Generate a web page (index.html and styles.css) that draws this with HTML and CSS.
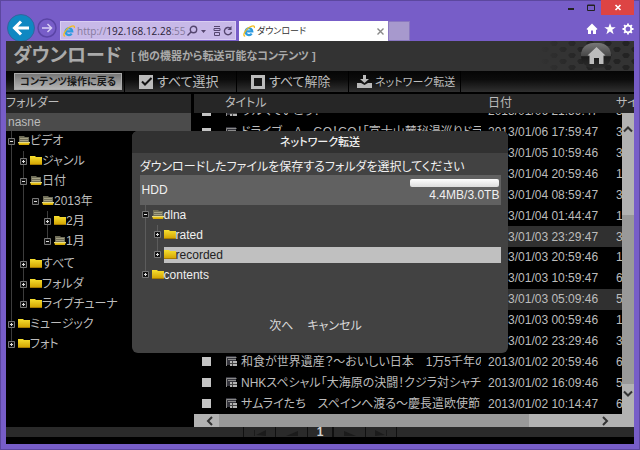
FILE: index.html
```html
<!DOCTYPE html>
<html lang="ja">
<head>
<meta charset="utf-8">
<title>ダウンロード</title>
<link rel="stylesheet" href="styles.css">
</head>
<body>
<svg width="0" height="0" class="defs" aria-hidden="true">
  <defs>
    <linearGradient id="gold" x1="0" y1="0" x2="0" y2="1"><stop offset="0" stop-color="#f8e030"/><stop offset="1" stop-color="#d0a000"/></linearGradient>
    <linearGradient id="fade" x1="0" x2="1" y1="0" y2="0"><stop offset="0" stop-color="#333"/><stop offset=".2" stop-color="#333"/><stop offset=".6" stop-color="#333" stop-opacity="0"/></linearGradient>
    <linearGradient id="knob" x1="0" x2="0" y1="0" y2="1"><stop offset="0" stop-color="#777"/><stop offset=".5" stop-color="#4a4a4a"/><stop offset=".55" stop-color="#1c1c1c"/><stop offset="1" stop-color="#2c2c2c"/></linearGradient>
    <pattern id="hex" width="18" height="12" patternUnits="userSpaceOnUse"><path fill="#232323" d="M2 0h4l2 2-2 3H2L0 2zM11 6h4l2 2-2 3h-4L9 8z"/></pattern>
    <symbol id="closed" viewBox="0 0 12 10"><path fill="url(#gold)" d="M0 0h5l1 1h6v8H0z"/><path fill="#a87c00" d="M0 8h12v1H0z"/></symbol>
    <symbol id="open" viewBox="0 0 12 10"><path fill="#6f6d58" d="M1 0h5l1 1h4v5H1z"/><path fill="#a5a184" d="M2 2h8v1H2zM2 4h8v1H2z"/><path fill="url(#gold)" d="M0 6h12l-1 3H1z"/><path fill="#e8dc80" d="M0 6h12v1H0z"/></symbol>
    <symbol id="plus" viewBox="0 0 7 7"><path fill="#111" stroke="#777" d="M.5.5h6v6h-6z"/><path fill="#ddd" d="M2 3h3v1H2zM3 2h1v3H3z"/></symbol>
    <symbol id="minus" viewBox="0 0 7 7"><path fill="#111" stroke="#777" d="M.5.5h6v6h-6z"/><path fill="#ddd" d="M2 3h3v1H2z"/></symbol>
    <symbol id="ie" viewBox="0 0 12 12"><path fill="none" stroke="#2e9be0" stroke-width="2.2" d="M3 6.4h6.3A3.4 3.4 0 1 0 8.7 8.6"/><path fill="none" stroke="#f2bd1d" stroke-width="1.3" d="M2.2 11C-1 11 2 5 6 2.5 9 .5 12 0 11.3 3"/></symbol>
    <symbol id="clip" viewBox="0 0 13 11"><path fill="#34343c" d="M1 0h10v9H1z"/><path fill="none" stroke="#8a8a8a" d="M1.500 10V1.500h10M3 3.500h8"/><path fill="#b4b4b4" d="M5 5h7v5H5z"/><path stroke="#444" d="M7.500 5v5M5 7.500h7"/></symbol>
  </defs>
</svg>

<header class="chrome">
  <nav class="history">
    <button class="back" aria-label="戻る"><svg viewBox="0 0 28 28"><circle cx="14" cy="14" r="13.5" fill="#0f88c2" stroke="#37639d"/><path fill="none" stroke="#fff" stroke-width="3" d="M22 14H8M14 7.5 7.5 14l6.5 6.5"/></svg></button>
    <button class="forward" aria-label="進む"><svg viewBox="0 0 20 20"><circle cx="10" cy="10" r="9" fill="none" stroke="#5a44a5" stroke-width="1.5"/><path fill="none" stroke="#d9cff5" stroke-width="1.5" d="M5 10h9M10.5 6l4 4-4 4"/></svg></button>
  </nav>
  <div class="address">
    <svg class="ie"><use href="#ie"/></svg>
    <span class="url"><i>http://</i>192.168.12.28<i>:55</i></span>
    <svg class="tools" viewBox="0 0 46 12"><g fill="none" stroke="#55466f" stroke-width="1.4"><circle cx="6.5" cy="4.5" r="3.2"/><path d="M4 7 .5 10.5"/><path stroke-width="1" d="M27 1.500h6M27 3.500h6v2h-6zM27.500 7.500h5v3h-5z"/><path d="M43.500 3.500a3.600 3.600 0 1 0 1 3.500"/></g><path fill="#55466f" d="M14 5h5l-2.500 3zM44.500 1v4h-4z"/></svg>
  </div>
  <div class="tab"><svg class="ie"><use href="#ie"/></svg><span>ダウンロード</span><button aria-label="タブを閉じる"><svg viewBox="0 0 7 7"><path stroke="#888" stroke-width="1.4" d="m.5.5 6 6m0-6-6 6"/></svg></button></div>
  <button class="newtab" aria-label="新しいタブ"></button>
  <div class="window-side">
    <div class="controls">
      <button aria-label="最小化"><svg viewBox="0 0 8 7"><path fill="#222" d="M1 4h6v2H1z"/></svg></button>
      <button aria-label="最大化"><svg viewBox="0 0 8 7"><path fill="none" stroke="#222" d="M.5 1h7v5.5h-7zM.5 1.500h7"/></svg></button>
      <button class="close" aria-label="閉じる"><svg viewBox="0 0 8 7"><path stroke="#fff" stroke-width="1.6" d="m1.500 1 5 5m0-5-5 5"/></svg></button>
    </div>
    <div class="quick">
      <button aria-label="ホーム"><svg viewBox="0 0 12 12"><path fill="#fff" d="M6 .5 11.500 6l-1 1L10 6.500V11H7V7.500H5V11H2V6.500l-.5.5-1-1z"/></svg></button>
      <button aria-label="お気に入り"><svg viewBox="0 0 12 12"><path fill="#fff" d="m6 .3 1.500 4h4.200L8.300 6.800l1.300 4.400L6 8.600l-3.600 2.600 1.300-4.400L.3 4.300h4.200z"/></svg></button>
      <button aria-label="ツール"><svg viewBox="0 0 12 12"><circle cx="6" cy="6" r="3.300" fill="none" stroke="#fff" stroke-width="1.800"/><path stroke="#fff" stroke-width="1.900" d="M6 .5v2M6 9.500v2M.5 6h2M9.500 6h2M2.100 2.100l1.400 1.400M8.500 8.500l1.400 1.400M2.100 9.900l1.400-1.400M8.500 3.500l1.400-1.400"/></svg></button>
    </div>
  </div>
</header>

<main class="page">
  <div class="titlebar">
    <h1>ダウンロード</h1>
    <h2>[ 他の機器から転送可能なコンテンツ ]</h2>
    <button class="home" aria-label="ホームへ"><svg viewBox="0 0 120 30"><path fill="url(#hex)" d="M0 0h120v30H0z"/><path fill="url(#fade)" d="M0 0h120v30H0z"/><rect x="67" y="2" width="30" height="25" rx="12" fill="url(#knob)"/><path fill="#bdbdbd" d="m82.500 6 9 8.500h-2V23h-4.500v-6h-5v6h-4.500v-8.500h-2z"/></svg></button>
  </div>
  <nav class="toolbar">
    <div class="cell first"><button class="return">コンテンツ操作に戻る</button></div>
    <button class="cell"><svg viewBox="0 0 15 15"><path fill="#bbb" d="M0 1h14v14H0z"/><path fill="none" stroke="#111" stroke-width="2" d="m3 7.500 3 3L12.500 4"/></svg>すべて選択</button>
    <button class="cell"><svg viewBox="0 0 15 15"><path fill="#bbb" d="M0 1h14v14H0z"/><path fill="#181818" d="M3 4h8v8H3z"/></svg>すべて解除</button>
    <button class="cell send"><svg viewBox="0 0 15 15"><path fill="#bbb" d="M6 1h3v4h3L7.500 9 3 5h3zM0 9h4l3.500 2L11 9h4v5H0z"/></svg>ネットワーク転送</button>
  </nav>

  <div class="panels">
    <section class="folders">
      <h3>フォルダー</h3>
      <div class="server">nasne</div>
      <ul class="tree">
        <li><div class="node"><svg class="box"><use href="#minus"/></svg><svg class="folder"><use href="#open"/></svg>ビデオ</div>
          <ul>
            <li><div class="node"><svg class="box"><use href="#plus"/></svg><svg class="folder"><use href="#closed"/></svg>ジャンル</div></li>
            <li><div class="node"><svg class="box"><use href="#minus"/></svg><svg class="folder"><use href="#open"/></svg>日付</div>
              <ul class="last">
                <li><div class="node"><svg class="box"><use href="#minus"/></svg><svg class="folder"><use href="#open"/></svg>2013年</div>
                  <ul>
                    <li><div class="node"><svg class="box"><use href="#plus"/></svg><svg class="folder"><use href="#closed"/></svg>2月</div></li>
                    <li><div class="node"><svg class="box"><use href="#minus"/></svg><svg class="folder"><use href="#open"/></svg>1月</div></li>
                  </ul></li>
              </ul></li>
            <li><div class="node"><svg class="box"><use href="#plus"/></svg><svg class="folder"><use href="#closed"/></svg>すべて</div></li>
            <li><div class="node"><svg class="box"><use href="#plus"/></svg><svg class="folder"><use href="#closed"/></svg>フォルダ</div></li>
            <li><div class="node"><svg class="box"><use href="#plus"/></svg><svg class="folder"><use href="#closed"/></svg>ライブチューナ</div></li>
          </ul></li>
        <li><div class="node"><svg class="box"><use href="#plus"/></svg><svg class="folder"><use href="#closed"/></svg>ミュージック</div></li>
        <li><div class="node"><svg class="box"><use href="#plus"/></svg><svg class="folder"><use href="#closed"/></svg>フォト</div></li>
      </ul>
    </section>

    <section class="contents">
      <table class="head"><tr><th class="check"></th><th class="title">タイトル</th><th class="date">日付</th><th class="size">サイ</th></tr></table>
      <div class="viewport">
        <div class="list">
          <table>
            <tr><td class="check"><input type="checkbox" aria-label="選択"></td><td class="title"><div><svg class="clip"><use href="#clip"/></svg>ウルくていこう！</div></td><td class="date">2013/01/06 21:59:47</td><td class="size">3</td></tr>
            <tr><td class="check"><input type="checkbox" aria-label="選択"></td><td class="title"><div><svg class="clip"><use href="#clip"/></svg>ドライブ　A　GO！GO！「富士山麓秘湯巡りドラ</div></td><td class="date">2013/01/06 17:59:47</td><td class="size">3</td></tr>
            <tr><td></td><td></td><td class="date">2013/01/05 10:59:46</td><td class="size">3</td></tr>
            <tr><td></td><td></td><td class="date">2013/01/04 20:59:46</td><td class="size">1</td></tr>
            <tr><td></td><td></td><td class="date">2013/01/04 08:59:47</td><td class="size">3</td></tr>
            <tr><td></td><td></td><td class="date">2013/01/04 01:44:47</td><td class="size">1</td></tr>
            <tr class="marked"><td></td><td></td><td class="date">2013/01/03 23:29:47</td><td class="size">3</td></tr>
            <tr><td></td><td></td><td class="date">2013/01/03 20:59:46</td><td class="size">1</td></tr>
            <tr><td></td><td></td><td class="date">2013/01/03 10:59:47</td><td class="size">6</td></tr>
            <tr class="marked"><td></td><td></td><td class="date">2013/01/03 05:09:46</td><td class="size">5</td></tr>
            <tr><td></td><td></td><td class="date">2013/01/03 00:59:46</td><td class="size">1</td></tr>
            <tr><td></td><td></td><td class="date">2013/01/02 23:29:46</td><td class="size">3</td></tr>
            <tr><td class="check"><input type="checkbox" aria-label="選択"></td><td class="title"><div><svg class="clip"><use href="#clip"/></svg>和食が世界遺産？～おいしい日本　1万5千年の</div></td><td class="date">2013/01/02 20:59:46</td><td class="size">6</td></tr>
            <tr><td class="check"><input type="checkbox" aria-label="選択"></td><td class="title"><div><svg class="clip"><use href="#clip"/></svg>NHKスペシャル「大海原の決闘！クジラ対シャチ</div></td><td class="date">2013/01/02 16:09:46</td><td class="size">5</td></tr>
            <tr><td class="check"><input type="checkbox" aria-label="選択"></td><td class="title"><div><svg class="clip"><use href="#clip"/></svg>サムライたち　スペインへ渡る～慶長遣欧使節</div></td><td class="date">2013/01/02 10:14:47</td><td class="size">6</td></tr>
          </table>
        </div>
        <div class="vbar"><span class="up"><svg viewBox="0 0 10 8"><path d="m1 6.500 4-4 4 4"/></svg></span><span class="thumb"></span><span class="down"><svg viewBox="0 0 10 8"><path d="m1 1.500 4 4 4-4"/></svg></span></div>
      </div>
      <div class="hbar"><span class="left"><svg viewBox="0 0 8 10"><path d="m6 1-4 4 4 4"/></svg></span><span class="thumb"></span><span class="right"><svg viewBox="0 0 8 10"><path d="m2 1 4 4-4 4"/></svg></span></div>
    </section>
  </div>

  <footer class="pager">
    <button aria-label="最初"><svg viewBox="0 0 14 8"><path d="M1 2h1v6H1zM13 2v6L3 7z"/></svg></button>
    <button aria-label="前"><svg viewBox="0 0 14 8"><path d="M13 3v5H1z"/></svg></button>
    <b>1</b>
    <button aria-label="次"><svg viewBox="0 0 14 8"><path d="M1 3v5h12z"/></svg></button>
    <button aria-label="最後"><svg viewBox="0 0 14 8"><path d="M12 2h1v6h-1zM1 2v6l10-1z"/></svg></button>
  </footer>

  <div class="overlay">
    <section class="dialog" role="dialog" aria-labelledby="dialog-title">
      <h3 id="dialog-title">ネットワーク転送</h3>
      <div class="body">
        <p>ダウンロードしたファイルを保存するフォルダを選択してください</p>
        <div class="drive"><span>HDD</span><div class="usage"><div class="meter"></div>4.4MB/3.0TB</div></div>
        <ul class="tree">
          <li><div class="node"><svg class="box"><use href="#minus"/></svg><svg class="folder"><use href="#open"/></svg>dlna</div>
            <ul>
              <li><div class="node"><svg class="box"><use href="#plus"/></svg><svg class="folder"><use href="#closed"/></svg>rated</div></li>
              <li><div class="node"><svg class="box"><use href="#plus"/></svg><span class="selected"><svg class="folder"><use href="#closed"/></svg>recorded</span></div></li>
            </ul></li>
          <li><div class="node"><svg class="box"><use href="#plus"/></svg><svg class="folder"><use href="#closed"/></svg>contents</div></li>
        </ul>
        <div class="actions"><button>次へ</button><button>キャンセル</button></div>
      </div>
    </section>
  </div>
</main>
</body>
</html>
```
FILE: styles.css
```css
* { box-sizing: border-box; margin: 0; padding: 0; }

body {
  display: flex;
  flex-direction: column;
  height: 100vh;
  padding: 0 6px 6px;
  overflow: hidden;
  background: #775dc8;
  box-shadow: inset 0 0 0 1px #5c479f;
  color: #bcbcbc;
  font: 12px/20px "Liberation Sans", "Noto Sans CJK JP", sans-serif;
  font-feature-settings: "palt";
}

button {
  border: 0;
  background: none;
  color: inherit;
  font: inherit;
  font-feature-settings: inherit;
}

svg { display: block; flex: none; }
ul { list-style: none; }
.defs { position: absolute; }

/* Browser frame */
.chrome {
  display: flex;
  align-items: flex-end;
  flex: none;
  height: 41px;
  color: #333;
}
.history { display: flex; align-items: center; gap: 2px; height: 26px; margin-left: 1px; width: 53px; }
.back svg { width: 28px; height: 28px; }
.forward svg { width: 20px; height: 20px; }
.address {
  display: flex;
  align-items: center;
  width: 176px;
  height: 19px;
  margin-bottom: 1px;
  padding: 0 2px;
  gap: 2px;
  border: 1px solid #d9cdf3;
  background: #c8b9e8;
}
.ie { width: 12px; height: 12px; }
.url { flex: 1; white-space: nowrap; font: 10px/16px "Open Sans", sans-serif; color: #2b2438; }
.url i { font-style: normal; color: #85799c; }
.tools { width: 46px; height: 12px; }
.tab {
  display: flex;
  align-items: center;
  gap: 2px;
  width: 149px;
  height: 20px;
  margin-left: 3px;
  padding: 0 4px;
  background: #fff;
  font-size: 9px;
}
.tab span { flex: 1; }
.tab button svg { width: 7px; height: 7px; }
.newtab { width: 22px; height: 20px; background: #a799cd; border: 1px solid #8a78c0; }
.window-side { flex: 1; display: flex; flex-direction: column; align-items: flex-end; gap: 8px; padding-bottom: 6px; }
.controls { display: flex; align-items: center; height: 15px; }
.controls button { display: grid; place-items: center; width: 20px; height: 15px; }
.controls .close { width: 33px; background: #dd4444; }
.controls svg { width: 8px; height: 7px; }
.quick { display: flex; gap: 6px; }
.quick svg { width: 12px; height: 12px; }

/* Page */
.page {
  position: relative;
  display: flex;
  flex-direction: column;
  flex: 1;
  min-height: 0;
  padding-bottom: 7px;
  background: #000;
}
.titlebar {
  display: flex;
  align-items: center;
  height: 30px;
  flex: none;
  padding-left: 7px;
  gap: 10px;
  background: #333;
  white-space: nowrap;
}
h1 { font-size: 19px; font-weight: 700; line-height: 30px; color: #aaa; }
h2 { font-size: 11px; font-weight: 700; line-height: 30px; color: #aaa; }
.home { margin-left: auto; }
.home svg { width: 120px; height: 30px; }

.toolbar {
  display: flex;
  flex: none;
  height: 21px;
  background: linear-gradient(#050505, #0c0c0c 40%, #303030);
}
.cell {
  display: flex;
  align-items: center;
  gap: 3px;
  width: 112px;
  padding-left: 14px;
  border-right: 1px solid #000;
  font-size: 13px;
  white-space: nowrap;
}
.cell svg { width: 15px; height: 15px; }
.cell.first { width: 119px; padding-left: 8px; }
.cell.send { padding-left: 8px; font-size: 11px; }
.return {
  width: 108px;
  height: 17px;
  background: linear-gradient(#777, #b5b5b5);
  border: 1px solid #aaa;
  color: #181818;
  font-size: 10px;
  font-weight: 700;
  line-height: 15px;
}

.panels {
  display: grid;
  grid-template-columns: 185px 1fr;
  gap: 3px;
  flex: 1;
  min-height: 0;
  padding-top: 2px;
}
.folders h3, .head { height: 19px; background: #262626; font-size: 12px; font-weight: 400; line-height: 19px; }
.server { height: 18px; padding-left: 2px; background: #4b4b4b; line-height: 18px; }

.tree { padding-left: 2px; background: linear-gradient(#3c3c3c, #3c3c3c) 5px 0 / 1px calc(100% - 10px) no-repeat; }
.tree ul { padding-left: 12px; background: linear-gradient(#3c3c3c, #3c3c3c) 15px 0 / 1px calc(100% - 10px) no-repeat; }
.tree .last { margin-bottom: 3px; background: none; }
.node { display: flex; align-items: center; height: 20px; white-space: nowrap; }
.box { width: 7px; height: 7px; margin-right: 3px; }
.folder { width: 12px; height: 10px; }

.contents { display: flex; flex-direction: column; min-width: 0; min-height: 0; }
.contents table { width: 100%; table-layout: fixed; border-collapse: collapse; }
th { font-weight: 400; text-align: left; white-space: nowrap; }
td { height: 20px; line-height: 20px; white-space: nowrap; }
.check { width: 31px; padding-left: 8px; }
.date { width: 128px; }
.head .size { width: 18px; overflow: hidden; }
.list .size { width: 6px; }
.title { padding-right: 7px; }
.title div { display: flex; align-items: center; gap: 3px; height: 20px; overflow: hidden; }
.clip { width: 13px; height: 11px; }
.marked { background: #303030; }
input[type="checkbox"] { display: block; appearance: none; width: 9px; height: 9px; background: #c4c4c4; }

.viewport { display: flex; flex: 1; min-height: 0; }
.list { display: flex; flex-direction: column; justify-content: flex-end; flex: 1; min-width: 0; overflow: hidden; }
.list table { flex: none; height: 313px; }
.vbar { display: flex; flex-direction: column; width: 12px; background: #b2b2b2; }
.vbar span { display: flex; justify-content: center; }
.vbar svg { width: 10px; height: 8px; }
.up { flex: 96; padding-top: 12px; }
.vbar .thumb { flex: 179; background: #999; }
.down { flex: 26; padding-top: 6px; }
.hbar { display: flex; flex: none; height: 13px; background: #b2b2b2; }
.hbar span { display: flex; align-items: center; }
.hbar svg { width: 8px; height: 10px; }
.left { width: 25px; padding-left: 12px; }
.hbar .thumb { flex: 310; background: #999; }
.right { flex: 80; justify-content: flex-end; padding-right: 25px; }
.vbar path, .hbar path { fill: none; stroke: #333; stroke-width: 2; }

.pager { display: flex; justify-content: center; flex: none; height: 10px; background: #2a2a2a; line-height: 11px; }
.pager button, .pager b { display: grid; place-items: center; width: 32px; height: 10px; border-left: 1px solid #101010; }
.pager b { width: 26px; color: #d0d0d0; border-right: 1px solid #101010; }
.pager svg { width: 14px; height: 8px; fill: #1b1b1b; }
.pager button:last-child { border-right: 1px solid #101010; }

/* Transfer dialog */
.overlay { position: absolute; inset: 0; display: grid; place-items: center; padding-bottom: 2px; }
.dialog { width: 60%; border-radius: 6px; overflow: hidden; background: #424242; color: #f0f0f0; }
.dialog h3 { height: 22px; background: #313131; font-size: 11px; font-weight: 500; line-height: 22px; text-align: center; }
.body { padding: 4px 7px 17px 8px; }
.dialog p { height: 18px; line-height: 20px; white-space: nowrap; }
.drive { display: flex; align-items: center; justify-content: space-between; height: 30px; padding: 0 2px; background: #616161; }
.usage { line-height: 16px; text-align: right; }
.meter { width: 89px; height: 8px; margin-top: 2px; border-radius: 2px; background: linear-gradient(#fff, #ddd); }
.dialog .tree { background-image: linear-gradient(#5c5c5c, #5c5c5c); }
.dialog .tree ul { background-image: linear-gradient(#5c5c5c, #5c5c5c); }
.selected { display: flex; align-items: center; flex: 1; height: 16px; background: #c0c0c0; color: #222; }
.actions { display: flex; justify-content: center; gap: 14px; padding: 31px 10px 0 0; }
.actions button { color: #d8d8d8; line-height: 20px; }
```
